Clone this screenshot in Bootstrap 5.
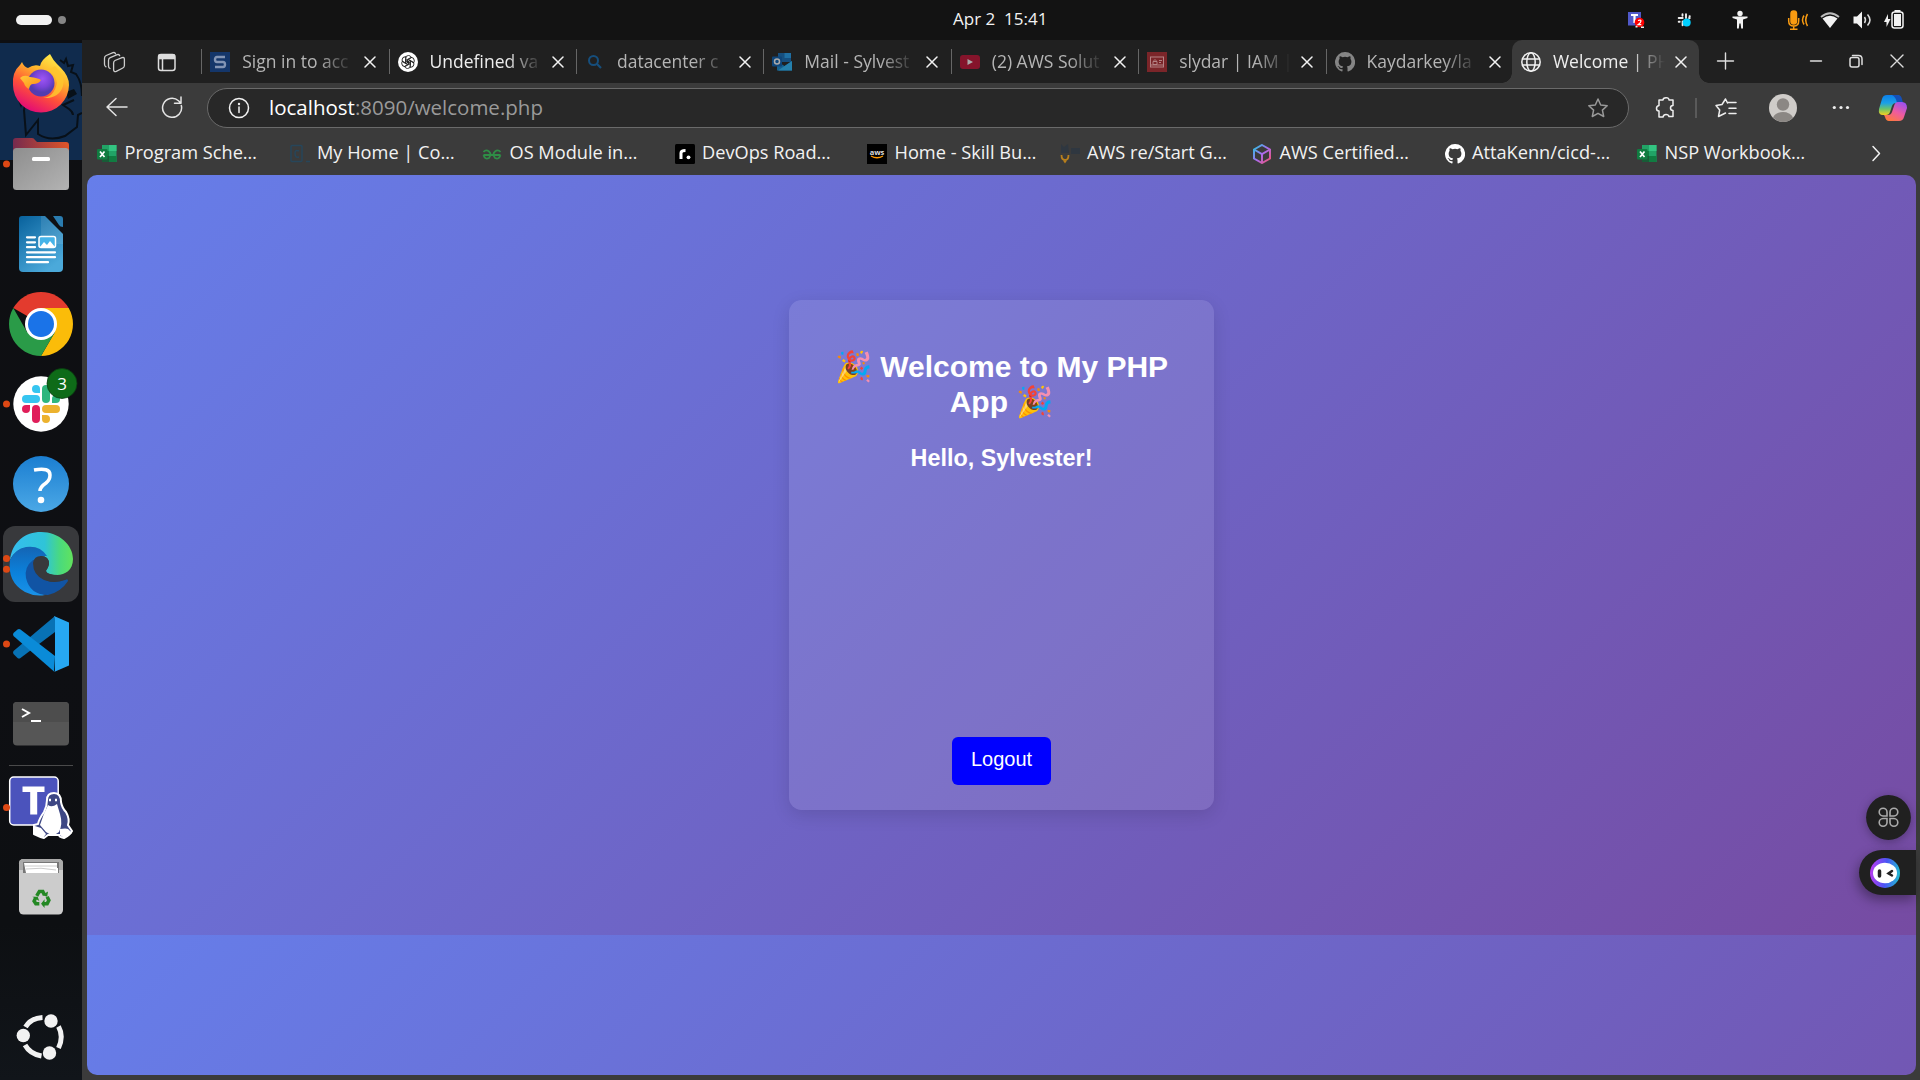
<!DOCTYPE html>
<html lang="en">
<head>
<meta charset="utf-8">
<title>Welcome | PHP App</title>
<link href="https://cdn.jsdelivr.net/npm/bootstrap@5.3.0/dist/css/bootstrap.min.css" rel="stylesheet">
<script src="https://cdn.jsdelivr.net/npm/bootstrap@5.3.0/dist/js/bootstrap.bundle.min.js"></script>
<style>
  body { width: 1920px; height: 1080px; background: #131313; color: #f2f2f2; font-family: "Open Sans", "Noto Sans", sans-serif; font-size: 17.5px; line-height: 1.3; }
  svg { display: block; flex: none; }
  .ln { fill: none; stroke: currentColor; stroke-width: 1.5; stroke-linecap: round; stroke-linejoin: round; }
  .topbar { height: 40px; background: #131313; }
  .clock { font-size: 17px; left: 953px; top: 8px; white-space: pre; letter-spacing: 0; }
  .ws-on { width: 36px; height: 10px; border-radius: 5px; background: #f2f2f2; margin-left: 16px; }
  .ws-off { width: 8px; height: 8px; border-radius: 50%; background: #868686; margin-left: 6px; }
  .dock { width: 82px; background: linear-gradient(#0e0f12, #0e0f13 60%, #0d0f12 85%, #11151a); padding-top: 4px; }
  .dock svg { position: relative; }
  .wallpaper { left: 0; top: 3px; }
  .dock .wallpaper { position: absolute; }
  .dock-sep { width: 64px; height: 1px; margin: 1px 9px 0; background: #4a4a4b; }
  .browser { width: 1838px; background: #3b3b3b; }
  .tabstrip { height: 43px; background: #202020; }
  .tools-l { width: 119.2px; padding-left: 20px; gap: 29px; }
  .tabx { width: 187.4px; height: 43px; padding-left: 9px; }
  .tabx:not(.live)::before { content: ""; width: 1px; height: 25px; background: #666; margin-left: -9px; margin-right: 8px; }
  .tabx .ttl { width: 112px; margin-left: 12px; margin-right: 10px; white-space: nowrap; overflow: hidden; color: #b5b5b5; -webkit-mask-image: linear-gradient(90deg, #000 68%, transparent 100%); mask-image: linear-gradient(90deg, #000 68%, transparent 100%); }
  .tabx .bright { color: #eee; }
  .tabx.live { background: #3b3b3b; border-radius: 10px 10px 0 0; position: relative; margin-left: -1px; }
  .tabx.live::before, .tabx.live::after { content: ""; position: absolute; bottom: 0; width: 10px; height: 10px; }
  .tabx.live::before { left: -10px; background: radial-gradient(circle at 0 0, #202020 9.5px, #3b3b3b 10px); }
  .tabx.live::after { right: -10px; background: radial-gradient(circle at 100% 0, #202020 9.5px, #3b3b3b 10px); }
  .toolbar { height: 49px; }
  .omni { width: 1422px; height: 40px; border: 1px solid #6a6a6a; border-radius: 20px; background: #282828; margin-left: 24px; padding: 0 19px 0 20px; }
  .url { font-size: 20.5px; color: #9a9a9a; margin-left: 19px; }
  .url b { font-weight: 400; color: #fff; }
  .bookmarks { height: 43px; padding-left: 15px; }
  .bm { width: 192.5px; gap: 7.5px; white-space: nowrap; font-size: 18.2px; }
  .bm span { margin-top: -2px; }
  .pagebox { width: 1829px; height: 900px; margin-left: 5px; border-radius: 10px; overflow: hidden; background: linear-gradient(135deg, #667eea, #764ba2) 0 0 / 100% 760px; padding-top: 125px; font-family: "Liberation Sans", Arial, sans-serif; }
  .welcome { width: 425px; height: 510px; margin-left: 702px; border-radius: 12.5px; background: rgba(255,255,255,.1); box-shadow: 0 5px 18px rgba(0,0,0,.12); padding: 49px 30px 25px; color: #fff; }
  .welcome h1 { font-size: 30px; line-height: 35px; font-weight: 700; margin: 0; }
  .welcome h2 { font-size: 23.4px; line-height: 27px; font-weight: 700; margin: 26px 0 0; }
  .btn.logout { width: 99px; height: 48px; border: 0; border-radius: 6px; background: #00f; color: #fff; font-size: 20px; line-height: 23px; padding: 11px 0 0; }
  .float-a { left: 1866px; top: 795px; filter: drop-shadow(0 2px 5px rgba(0,0,0,.3)); }
  .float-b { left: 1859px; top: 850px; width: 57px; height: 45px; border-radius: 23px 0 0 23px; background: #202020; box-shadow: -2px 5px 12px rgba(0,0,0,.35); }
</style>
</head>
<body class="d-flex flex-column overflow-hidden">
<svg width="0" height="0" class="position-absolute">
  <defs>
    <linearGradient id="ff1" x1=".8" y1="0" x2=".3" y2="1"><stop offset="0" stop-color="#fff44f"/><stop offset=".35" stop-color="#ffb52b"/><stop offset=".65" stop-color="#ff5138"/><stop offset="1" stop-color="#e1067a"/></linearGradient>
    <radialGradient id="ff2" cx=".55" cy=".35"><stop offset="0" stop-color="#9d55f5"/><stop offset=".6" stop-color="#7a43d8"/><stop offset="1" stop-color="#533cb0"/></radialGradient>
    <linearGradient id="ff3" x1="0" y1="0" x2="1" y2="1"><stop offset="0" stop-color="#ffc93a"/><stop offset="1" stop-color="#ff8a16"/></linearGradient>
    <linearGradient id="fo" x1="0" x2="1"><stop offset="0" stop-color="#762a4e"/><stop offset="1" stop-color="#e05528"/></linearGradient>
    <linearGradient id="gr" x2="1" y2="1"><stop offset="0" stop-color="#8e8e8e"/><stop offset="1" stop-color="#b3b3b3"/></linearGradient>
    <linearGradient id="wr" x2=".6" y2="1"><stop offset="0" stop-color="#08619c"/><stop offset="1" stop-color="#4ba9da"/></linearGradient>
    <linearGradient id="hp" x2="0" y2="1"><stop offset="0" stop-color="#1b7ed1"/><stop offset="1" stop-color="#4ba8e6"/></linearGradient>
    <linearGradient id="e1"><stop offset="0" stop-color="#35bdf0"/><stop offset=".55" stop-color="#2fc4d8"/><stop offset=".8" stop-color="#4bda7c"/><stop offset="1" stop-color="#62e35d"/></linearGradient>
    <linearGradient id="e2" x2="0" y2="1"><stop offset="0" stop-color="#1464b4"/><stop offset=".55" stop-color="#0b82dc"/><stop offset="1" stop-color="#1a92e8"/></linearGradient>
    <linearGradient id="cp1" x2="0" y2="1"><stop offset="0" stop-color="#0d7fe8"/><stop offset=".4" stop-color="#1aa0e8"/><stop offset=".7" stop-color="#6bc46a"/><stop offset="1" stop-color="#f5cf20"/></linearGradient>
    <linearGradient id="cp2" x1=".8" y1="0" x2=".2" y2="1"><stop offset="0" stop-color="#9a50f0"/><stop offset=".5" stop-color="#ee5ba0"/><stop offset="1" stop-color="#ff7a38"/></linearGradient>
    <linearGradient id="cube" x2="1" y2="1"><stop offset="0" stop-color="#20c8e0"/><stop offset=".5" stop-color="#a86cf0"/><stop offset="1" stop-color="#f4506c"/></linearGradient>
    <linearGradient id="bot" x1="0" y1=".7" x2="1" y2=".8"><stop offset="0" stop-color="#b33df0"/><stop offset=".5" stop-color="#4a55f5"/><stop offset="1" stop-color="#1fc3cf"/></linearGradient>
    <symbol id="x" viewBox="0 0 12 12"><path d="M1 1 11 11M11 1 1 11" class="ln"/></symbol>
    <symbol id="gh" viewBox="0 0 16 16"><path fill="currentColor" d="M8 0a8 8 0 0 0-2.53 15.59c.4.07.55-.17.55-.38v-1.49c-2.23.48-2.7-.94-2.7-.94-.36-.93-.89-1.17-.89-1.17-.73-.5.05-.49.05-.49.81.06 1.23.83 1.23.83.72 1.23 1.88.87 2.34.67.07-.52.28-.87.5-1.07-1.77-.2-3.63-.89-3.63-3.95 0-.87.31-1.59.82-2.15-.08-.2-.36-1.01.08-2.12 0 0 .67-.21 2.2.82a7.6 7.6 0 0 1 4 0c1.53-1.04 2.2-.82 2.2-.82.44 1.1.16 1.92.08 2.12.51.56.82 1.27.82 2.15 0 3.07-1.87 3.75-3.65 3.95.29.25.54.73.54 1.48v2.2c0 .21.15.46.55.38A8 8 0 0 0 8 0z"/></symbol>
    <symbol id="xls" viewBox="0 0 20 20"><path fill="#21a366" d="M5 1h14.500v17H5z"/><path fill="#33c481" d="M12 1h7.500v6H12z"/><path fill="#107c41" d="M5 7h7v6H5zM12 12h7.500v6H12z"/><path fill="#185c37" d="M5 12h7v6H5z"/><rect y="5" width="10.500" height="10.500" rx="1" fill="#107c41"/><path d="m3 7.500 4.500 5.500M7.500 7.500 3 13" stroke="#fff" stroke-width="1.700"/></symbol>
    <symbol id="star" viewBox="0 0 22 22"><path class="ln" d="m11 2 2.700 6 6.500.7-4.800 4.400 1.300 6.400L11 16.300l-5.700 3.200 1.300-6.400L1.800 8.700 8.300 8z"/></symbol>
    <symbol id="slackmark" viewBox="0 0 38 38"><g fill="#36c5f0"><rect y="10" width="18" height="8" rx="4"/><path d="M18 8V4a4 4 0 1 0-4 4z"/></g><g fill="#2eb67d"><rect x="20" width="8" height="18" rx="4"/><path d="M30 18h4a4 4 0 1 0-4-4z"/></g><g fill="#ecb22e"><rect x="20" y="20" width="18" height="8" rx="4"/><path d="M20 30v4a4 4 0 1 0 4-4z"/></g><g fill="#e01e5a"><rect x="10" y="20" width="8" height="18" rx="4"/><path d="M8 20H4a4 4 0 1 0 4 4z"/></g></symbol>
  </defs>
</svg>

<!-- desktop top bar -->
<header class="topbar d-flex align-items-center position-relative flex-shrink-0">
  <span class="ws-on"></span><span class="ws-off"></span>
  <span class="clock position-absolute">Apr 2  15:41</span>
  <svg class="ms-auto" width="300" height="40" viewBox="1620 0 300 40">
    <rect x="1628" y="12" width="13" height="13.500" fill="#5059c9"/><path d="M1631 15h7M1634.500 15v8" stroke="#fff" stroke-width="2.200"/><circle cx="1639.500" cy="22.500" r="4.800" fill="#f00"/><path d="M1638 20.500q3-1 3 .6t-3 3.600h3.300" fill="none" stroke="#fff" stroke-width="1.200"/><path d="M1635.500 26h2v1.500h-2zM1641 26.500h3v1.500h-3z" fill="#eee"/>
    <g stroke="#eee" stroke-width="1.900" stroke-linecap="round"><path d="M1682.500 14.300v1.500M1686 14.300v3.800M1678.700 18h4M1689 18h.8M1678.700 21.700h1M1682.600 21.500v3.800M1689.500 16.200h.3"/></g><circle cx="1686.700" cy="22.500" r="4" fill="#00cfff"/>
    <g fill="#f2f2f2"><circle cx="1740" cy="13.500" r="2.700"/><path d="M1732.500 16.500h15v1.500l-4.500 1.500v9h-1.800l-.6-5h-1.200l-.6 5h-1.800v-9l-4.500-1.500z"/></g>
    <g fill="none" stroke="#f99b11" stroke-width="1.500"><rect x="1791" y="11" width="5.500" height="13" rx="2.700" fill="#f99b11"/><path d="M1788.700 18v3q0 5 5 5t5-5v-3M1793.700 26v3M1790 29.200h7.500M1804 15.500q-3 4.500 0 9M1807.500 14q-3.500 6 0 12"/></g>
    <path d="M1822.500 18.500q7.500-5.500 15 0l-7.500 9.500z" fill="#f2f2f2"/><path d="M1821 17q9-7.500 18 0" stroke="#bbb" stroke-width="1.800" fill="none"/>
    <path d="M1853.500 16.500h3.500l5-5v17l-5-5h-3.500z" fill="#f2f2f2"/><path d="M1864.500 17q2 3 0 6M1867.500 14.500q5 5.500 0 11" stroke="#ddd" stroke-width="1.500" fill="none"/>
    <path d="m1888 14-4 8h2.500v5l4-8h-2.500z" fill="#f2f2f2"/><path d="M1894.500 10h6v2h-6z" fill="#f2f2f2"/><rect x="1892" y="12" width="11" height="16" rx="2.500" fill="none" stroke="#f2f2f2" stroke-width="1.500"/><path d="M1894 14h7v12h-7z" fill="#f2f2f2"/>
  </svg>
</header>

<div class="d-flex flex-grow-1">
<!-- dock -->
<nav class="dock d-flex flex-column position-relative flex-shrink-0">
  <svg class="wallpaper" width="82" height="117" viewBox="0 43 82 117"><path fill="#102b4d" d="M0 43h82v117H0z"/><path d="M20 103l6-2-2 9 2 25 12-15v14q12 8 27 2l12-9 1-12 4-2M60 60l4 3 2-4 2 7 5-1-2 7 5 2q6 8 6 22M74 100l-11 5 6 4q4 3 4 6" fill="none" stroke="#081018" stroke-width="2"/><path d="m66 92 8-3 3 5-9 5zM18 100l5 2-2 6z" fill="#081018"/></svg>
  <svg width="82" height="80" viewBox="0 44 82 80">
    <path fill="url(#ff1)" d="M50 54q3 6 7 10l4 4q8 8 8 17A28 27.500 0 0 1 13 85Q12 72 20 65l2-3q2 5 6 6 6-4 12-2Q41 60 50 54z"/><circle cx="41" cy="83" r="13.500" fill="url(#ff2)"/><path d="M48 70q8 5 9 13-3 14-14 15 16 1 20-12 3-10-8-20z" fill="#ffc52e" opacity=".85"/><path d="M20 78q4-4 10-1 8 1 11 3-2 4-8 4-3 0-4 5-4-2-5-6z" fill="url(#ff3)"/>
  </svg>
  <svg width="82" height="80" viewBox="0 124 82 80"><path d="M13 141q0-3 3-3h16q2 0 3 2l2 2h29q3 0 3 3v13H13z" fill="url(#fo)"/><rect x="13" y="148" width="56" height="42" rx="3.500" fill="url(#gr)"/><rect x="32" y="157" width="18" height="4" rx="1.500" fill="#fff"/><circle cx="6.500" cy="164" r="3.500" fill="#dd4814"/></svg>
  <svg width="82" height="80" viewBox="0 204 82 80"><path d="M22 216h23l18 18v34q0 4-4 4H23q-4 0-4-4v-49q0-3 3-3z" fill="url(#wr)"/><path d="M53 216h7q3 0 3 3v8q-3 0-4-2z" fill="#2a7cb0"/><path d="M41 216h4l18 18v10H41z" fill="#fff" opacity=".1"/><g stroke="#fff" stroke-width="2.200" stroke-linecap="round"><path d="M27 237.300h8M27 242.300h8M27 247.200h8M27 252.300h28M27 257.200h28M27 262.200h21"/></g><rect x="39" y="236.500" width="16.500" height="11" rx="2" fill="#46b3e8" stroke="#fff" stroke-width="1.500"/><path d="m40 247 4-5 3 3 3-4 5 6z" fill="#fff"/></svg>
  <svg width="82" height="80" viewBox="0 284 82 80"><path d="M41 324 13.300 308A32 32 0 0 1 68.700 308z" fill="#e33b2e"/><path d="M41 324V308H68.700A32 32 0 0 1 41 356L55 332z" fill="#fbbc09"/><path d="M41 324 27 332 13.300 308A32 32 0 0 0 41 356L55 332z" fill="#2a9b48"/><circle cx="41" cy="324" r="16" fill="#fff"/><circle cx="41" cy="324" r="13" fill="#1a73e8"/></svg>
  <svg width="82" height="80" viewBox="0 364 82 80"><circle cx="41" cy="404" r="27.700" fill="#fff"/><use href="#slackmark" x="22" y="385" width="38" height="38"/><circle cx="62" cy="383.500" r="15" fill="#0e6b18" stroke="#0a3d10" stroke-width=".8"/><text x="62" y="390" text-anchor="middle" fill="#fff" font-size="17">3</text><circle cx="6.500" cy="404" r="3.500" fill="#dd4814"/></svg>
  <svg width="82" height="80" viewBox="0 444 82 80"><circle cx="41" cy="484" r="28" fill="url(#hp)"/><path d="M34 470q16-3 16 5 0 5-4 8-6 4-6 8" fill="none" stroke="#fff" stroke-width="3.500"/><circle cx="41" cy="500" r="3.300" fill="#fff"/></svg>
  <svg width="82" height="80" viewBox="0 524 82 80"><rect x="3" y="526" width="76" height="76" rx="12" fill="#38393c"/>
    <path d="M10 560C12 542 25 532 41 532c18 0 32 13 32 27 0 11-8 16-16 16-6 0-11-2-11-4 0-2 3-3 3-8 0-4-3-7-8-7C34 544 18 545 10 560z" fill="url(#e1)"/><path d="M10 560q-3 22 15 32 10 5 20 3-14-6-13-20 1-15 9-19h6q-7-11-21-9-11 2-16 13z" fill="url(#e2)"/><path d="M33 560q-9 7-7 18 4 17 22 17 13-3 20-14 0-3-3-1-16 6-26-5-6-8-3-15z" fill="#1154a4"/>
    <path d="M33 563q1-7 8-7 8 0 8 8-1 4-3 7 1 4 12 4h8l1 4q-13 5-23 1-11-5-11-17z" fill="#38393c"/>
    <circle cx="6.500" cy="558.500" r="3.500" fill="#dd4814"/><circle cx="6.500" cy="569.200" r="3.500" fill="#dd4814"/></svg>
  <svg width="82" height="80" viewBox="0 604 82 80"><path d="M55 616 13.500 651q-1 1.500 0 3l4 4q1.500 1 3 0L55 632z" fill="#0872b5"/><path d="M54 671.500 13.500 636q-1-1.500 0-3l4-3.500q1.500-1 3 0L55 656z" fill="#0a8bd8"/><path d="m54 616 15 6.500v43L54 672q1-.5 1-2v-52z" fill="#27a8f3"/><circle cx="6.500" cy="644" r="3.500" fill="#dd4814"/></svg>
  <svg width="82" height="80" viewBox="0 684 82 80"><rect x="13" y="702" width="56" height="43.500" rx="4" fill="#565656"/><path d="M13 722v-16q0-4 4-4h48q4 0 4 4v16z" fill="#4d4d4d"/><path d="m22 709 7 4-7 4M31 721h10" fill="none" stroke="#fff" stroke-width="2"/></svg>
  <div class="dock-sep"></div>
  <svg width="82" height="80" viewBox="0 765 82 80"><rect x="9.700" y="776" width="48.500" height="48" rx="4" fill="#4b53bc" stroke="#fff" stroke-width="1.500"/><path d="M22.500 785.500h22v5.500h-7.300v22.500h-7V791h-7.700z" fill="#fff"/>
    <path d="M54 792q7 0 7 9 1 6 5 10 4 7 2 13l4 6q-2 4-8 7-5-1-5-3H48l-4 3q-4-1-10-4v-9l4-1q1-5 6-12 3-6 3-12 0-7 7-7z" fill="#3d4784" stroke="#fff" stroke-width="2"/><path d="M48 804q4 3 9-1l3 10q3 10-1 18-6 5-13 0l-6-7q3-10 8-20zM35 825l6 2 5 6-3 4-8-4zM60 828q6-1 8 0l4 4-8 5-4-3z" fill="#fff"/><path d="M49 799h2M55 799h2" stroke="#fff" stroke-width="2.500"/><circle cx="6.500" cy="806.500" r="3.500" fill="#dd4814"/></svg>
  <svg width="82" height="80" viewBox="0 846 82 80"><rect x="19" y="859" width="44" height="55.500" rx="4.500" fill="#ccc"/><path d="M19 870v-6.500q0-4.500 4.500-4.500h35q4.500 0 4.500 4.500v6.500z" fill="#aaa"/><path d="M23 862h36v11H23z" fill="#777"/><path d="M24 863h33v5h1v5H26z" fill="#fff"/><path d="M25 866h32M26 869q15-2 30 1" stroke="#ccc" fill="none"/><g transform="translate(5.400 116.300) scale(.87)"><g fill="none" stroke="#238823" stroke-width="4"><path d="m36 896 3-5h4l2 4M48 897l2 4-2 4h-5M39 905h-4l-2-3 2-4"/></g><path d="m42 895 6 2 1-6zM45 900l-4 5 4 5zM31 897h6l2 5z" fill="#238823"/></g></svg>
  <svg class="mt-auto mb-1" width="82" height="80" viewBox="0 996 82 80"><g fill="#f2f2f2"><circle cx="23.300" cy="1035.500" r="6.700"/><circle cx="51" cy="1021" r="6.700"/><circle cx="49.500" cy="1053" r="6.700"/></g><g fill="none" stroke="#f2f2f2" stroke-width="5"><path d="M25.500 1027Q31 1018 42.500 1017.500M58.500 1026.500q5.500 10 0 21.500M25 1045q5 9 16.500 11"/></g></svg>
</nav>

<!-- browser window -->
<main class="browser">
  <div class="tabstrip d-flex align-items-center">
    <div class="tools-l d-flex align-items-center">
      <svg width="24" height="24" viewBox="102 48 24 24" style="color:#ccc"><path class="ln" style="stroke-width:1.300" d="M115 58.500l7-2.800q2.300-.8 2.400 1.500v6.300q0 1.700-1.600 2.500l-6.500 3.300q-2.500 1-2.700-1.400v-7q0-1.700 1.400-2.400zM110 66.500q-1.500-.5-1.500-2.500v-5.500q0-2 1.700-2.800l7-3q2-.6 2.500 1M106 64.800q-1.500-.5-1.500-2.500v-6q0-2 1.700-2.800l6.800-2.800q2-.6 2.500 1"/></svg>
      <svg width="24" height="24" viewBox="0 0 24 24" style="color:#ddd"><rect x="3.500" y="4.500" width="16.500" height="16" rx="2.500" class="ln"/><path d="M3.500 4.500h16.500v4.800H3.500z" fill="currentColor"/><path d="M7.500 9v11" class="ln"/></svg>
    </div>
    <div class="tabx d-flex align-items-center"><svg width="20" height="20" viewBox="0 0 20 20"><path fill="#14366a" d="M0 0h20v20H0z"/><path d="M15 5H7q-2 0-2 2.500T7 10h6q2 0 2 2.500T13 15H5" fill="none" stroke="#8294b4" stroke-width="2.400"/></svg><span class="ttl">Sign in to acc</span><svg width="12" height="12"><use href="#x"/></svg></div>
    <div class="tabx d-flex align-items-center"><svg width="20" height="20" viewBox="0 0 20 20"><circle cx="10" cy="10" r="10" fill="#fff"/><g fill="none" stroke="#222" stroke-width=".9"><g id="petal"><path d="M7.500 11V6.500q0-3 3-3 2 0 3 2L9.500 8v3"/></g><use href="#petal" transform="rotate(60 10 10)"/><use href="#petal" transform="rotate(120 10 10)"/><use href="#petal" transform="rotate(180 10 10)"/><use href="#petal" transform="rotate(240 10 10)"/><use href="#petal" transform="rotate(300 10 10)"/></g></svg><span class="ttl bright">Undefined va</span><svg width="12" height="12"><use href="#x"/></svg></div>
    <div class="tabx d-flex align-items-center"><svg width="20" height="20" viewBox="0 0 20 20"><circle cx="8.500" cy="8.500" r="4.500" fill="none" stroke="#164e7c" stroke-width="2"/><path d="m12 12 4 4" stroke="#164e7c" stroke-width="2.200"/></svg><span class="ttl">datacenter c</span><svg width="12" height="12"><use href="#x"/></svg></div>
    <div class="tabx d-flex align-items-center"><svg width="20" height="20" viewBox="0 0 20 20"><path fill="#164f7f" d="M6 1h13v9H6z"/><path fill="#1f6fa3" d="M12.500 1H19v5h-6.500z"/><path fill="#14608f" d="M5 9l7.500 5L20 9v9.500H5z"/><path fill="#2581ad" d="m20 9-14 9.500h14z"/><rect y="4.500" width="10" height="10" rx="1" fill="#0e457a"/><circle cx="5" cy="9.500" r="2.500" fill="none" stroke="#aaa" stroke-width="1.500"/></svg><span class="ttl">Mail - Sylvest</span><svg width="12" height="12"><use href="#x"/></svg></div>
    <div class="tabx d-flex align-items-center"><svg width="20" height="20" viewBox="0 0 20 20"><rect y="3" width="20" height="14" rx="3" fill="#85142b"/><path d="m7.500 7 5.500 3-5.500 3z" fill="#aaa"/></svg><span class="ttl">(2) AWS Solut</span><svg width="12" height="12"><use href="#x"/></svg></div>
    <div class="tabx d-flex align-items-center"><svg width="20" height="20" viewBox="0 0 20 20"><path fill="#7b2529" d="M0 0h20v20H0z"/><g fill="none" stroke="#b48284"><rect x="3.500" y="5" width="13" height="10"/><path d="M6 9.500h4v3H6zM7 9.500v-1q1-2 2 0v1M12 8.500h3M12 10.500h2M4 13h12"/></g></svg><span class="ttl">slydar | IAM |</span><svg width="12" height="12"><use href="#x"/></svg></div>
    <div class="tabx d-flex align-items-center"><svg width="20" height="20" style="color:#858585"><use href="#gh"/></svg><span class="ttl">Kaydarkey/la</span><svg width="12" height="12"><use href="#x"/></svg></div>
    <div class="tabx live d-flex align-items-center"><svg width="20" height="20" viewBox="0 0 20 20"><g class="ln"><circle cx="10" cy="10" r="9.200"/><ellipse cx="10" cy="10" rx="4.200" ry="9.200"/><path d="M1.500 7h17M1.500 13h17"/></g></svg><span class="ttl bright">Welcome | PH</span><svg width="12" height="12"><use href="#x"/></svg></div>
    <svg width="220" height="43" viewBox="1700 40 220 43" style="color:#ddd"><path class="ln" style="stroke-width:1.400" d="M1718.500 61h16M1726.500 53v16M1811.500 61h11M1892 55l12 12M1904 55l-12 12"/><g class="ln"><rect x="1851" y="57.500" width="9" height="9.500" rx="2"/><path d="M1853.500 55.500h6q3.500 0 3.500 3.500v5.500"/></g></svg>
  </div>

  <div class="toolbar d-flex align-items-center">
    <svg width="101" height="49" viewBox="82 83 101 49" style="color:#e4e4e4"><path class="ln" d="M127 107h-20M116 98.500l-9 8.500 9 8.500"/></svg>
    <div class="position-relative" style="margin-left:-101px;width:101px"><svg width="101" height="49" viewBox="82 83 101 49" style="color:#e4e4e4"><path class="ln" d="M181.300 105.500a9.500 9.500 0 1 1-2.800-4.700l2.500 2.500M181 97v6.300h-6.500"/></svg></div>
    <div class="omni d-flex align-items-center">
      <svg width="22" height="22" viewBox="0 0 22 22"><circle cx="11" cy="11" r="9.500" class="ln"/><path d="M11 10v5.500" class="ln"/><circle cx="11" cy="7" r="1.200" fill="#eee"/></svg>
      <span class="url"><b>localhost</b>:8090/welcome.php</span>
      <svg class="ms-auto" width="22" height="22" style="color:#999"><use href="#star"/></svg>
    </div>
    <svg width="291" height="49" viewBox="1629 83 291 49" style="color:#eee">
      <path class="ln" d="M1659 100h4q0-2 3-2.200t3 2.200h4v5.500q-2.500 0-2.500 2.500t2.500 2.500v6h-4q-.5-2-3-2t-3 2.500h-4v-6q-2.500 0-2.500-2.500t2.500-3z"/>
      <path d="M1696 98v20" stroke="#666" stroke-width="1.500"/>
      <path class="ln" d="M1728 102.500h8M1729 108.300h7M1729 113.500h7M1725.500 113l-7 3.500 1.200-6.500-3.700-4.500 6-1 3.500-5.500 2 4"/>
      <circle cx="1783" cy="108" r="14" fill="#cfccc9"/><circle cx="1783" cy="104.500" r="6.200" fill="#8b8784"/><path d="M1773 117.500q3-5.500 10-5.500t10 5.500q-4 4.500-10 4.500t-10-4.500z" fill="#8b8784"/>
      <g fill="#eee"><circle cx="1834.300" cy="107.500" r="1.600"/><circle cx="1841" cy="107.500" r="1.600"/><circle cx="1847.500" cy="107.500" r="1.600"/></g>
      <path d="M1887 95h10q3 0 4 4l1 4h-6q-3 0-4 3l-2 6q-1 3-4 3h-3q-5 0-4-6l3-10q1-4 5-4z" fill="url(#cp1)"/><path d="M1892 95h6q3 0 4 4l1 4h-6q-1-6-5-8z" fill="#1550b8"/><path d="M1898 102h4q5 0 5 6l-3 9q-1 4-5 4h-10q-3 0-4-4l-1-2h4q3 0 4-3l2-6q1-4 4-4z" fill="url(#cp2)"/>
    </svg>
  </div>

  <div class="bookmarks d-flex align-items-center">
    <div class="bm d-flex align-items-center"><svg width="20" height="20"><use href="#xls"/></svg><span>Program Sche…</span></div>
    <div class="bm d-flex align-items-center"><svg width="20" height="20" viewBox="0 0 20 20"><rect x="1" y="1.500" width="11" height="16" rx="1" fill="none" stroke="#27465a" stroke-width="1.500"/><path d="M9 7q-4-2-4 2.500T9 13M16 17.500h4" fill="none" stroke="#27465a" stroke-width="1.500"/></svg><span>My Home | Co…</span></div>
    <div class="bm d-flex align-items-center"><svg width="20" height="20" viewBox="0 0 20 20"><path d="M1.500 11h17M1.500 8Q4 5 7 7.500T7 14q-4 2-5.500-3M18.500 8Q16 5 13 7.500t0 6.500q4 2 5.500-3" fill="none" stroke="#2f8d46" stroke-width="1.800"/></svg><span>OS Module in…</span></div>
    <div class="bm d-flex align-items-center"><svg width="20" height="20" viewBox="0 0 20 20"><rect width="20" height="20" rx="1.500"/><path d="M6 15V9q0-2.500 4.500-2.500" fill="none" stroke="#fff" stroke-width="3"/><circle cx="13.500" cy="13.300" r="1.900" fill="#fff"/></svg><span>DevOps Road…</span></div>
    <div class="bm d-flex align-items-center"><svg width="20" height="20" viewBox="0 0 20 20"><path d="M0 0h20v20H0z"/><text x="10" y="10.500" text-anchor="middle" font-size="7.500" font-weight="700" fill="#ddd">aws</text><path d="M4 12q6 3.500 12 0" fill="none" stroke="#f90" stroke-width="1.300"/></svg><span>Home - Skill Bu…</span></div>
    <div class="bm d-flex align-items-center"><svg width="20" height="20" viewBox="0 0 20 20"><path d="M1 0l3 3 4-3 1 9H1zM11 4h9v6h-9z" fill="#2f3740"/><path d="M1.500 11q0 5 3.500 5t3.500-5" fill="none" stroke="#b9801c" stroke-width="1.800"/><path d="M3 16.500h4l-2 3z" fill="#b9801c"/></svg><span>AWS re/Start G…</span></div>
    <div class="bm d-flex align-items-center"><svg width="20" height="20" viewBox="0 0 20 20"><path d="m10 1 8 4.500v9L10 19l-8-4.500v-9zM2 5.500l8 4.500 8-4.500M10 10v9" fill="none" stroke="url(#cube)" stroke-width="2"/></svg><span>AWS Certified…</span></div>
    <div class="bm d-flex align-items-center"><svg width="20" height="20" style="color:#fff"><use href="#gh"/></svg><span>AttaKenn/cicd-…</span></div>
    <div class="bm d-flex align-items-center"><svg width="20" height="20"><use href="#xls"/></svg><span>NSP Workbook…</span></div>
    <svg class="ms-auto me-4" width="12" height="18" viewBox="-11 0 12 18" overflow="visible"><path class="ln" d="m-22 1.500 6.500 7-6.500 7"/></svg>
  </div>

  <section class="pagebox">
    <div class="welcome d-flex flex-column align-items-center text-center">
      <h1>🎉 Welcome to My PHP App 🎉</h1>
      <h2>Hello, Sylvester!</h2>
      <button type="button" class="btn logout mt-auto d-flex justify-content-center align-items-start">Logout</button>
    </div>
  </section>
</main>
</div>

<!-- floating assistant controls -->
<svg class="float-a position-absolute" width="45" height="45" viewBox="0 0 45 45"><circle cx="22.500" cy="22.500" r="22.400" fill="#202020"/><g fill="none" stroke="#aaa" stroke-width="1.600"><path d="M21 21h-4a3.900 3.900 0 1 1 4-4zM24 21h4a3.900 3.900 0 1 0-4-4zM21 23.500h-4a3.900 3.900 0 1 0 4 4zM24 23.500h4a3.900 3.900 0 1 1-4 4z"/></g></svg>
<div class="float-b position-absolute"><svg width="57" height="45" viewBox="1859 850 57 45"><circle cx="1885" cy="873" r="15" fill="url(#bot)"/><ellipse cx="1885" cy="873" rx="12" ry="10.300" fill="#fff"/><path d="M1879.500 871v5" stroke="#222" stroke-width="3.500" stroke-linecap="round"/><path d="m1892 871-3.500 2.500 3.500 2" stroke="#222" stroke-width="2.500" fill="none" stroke-linecap="round"/></svg></div>
</body>
</html>
